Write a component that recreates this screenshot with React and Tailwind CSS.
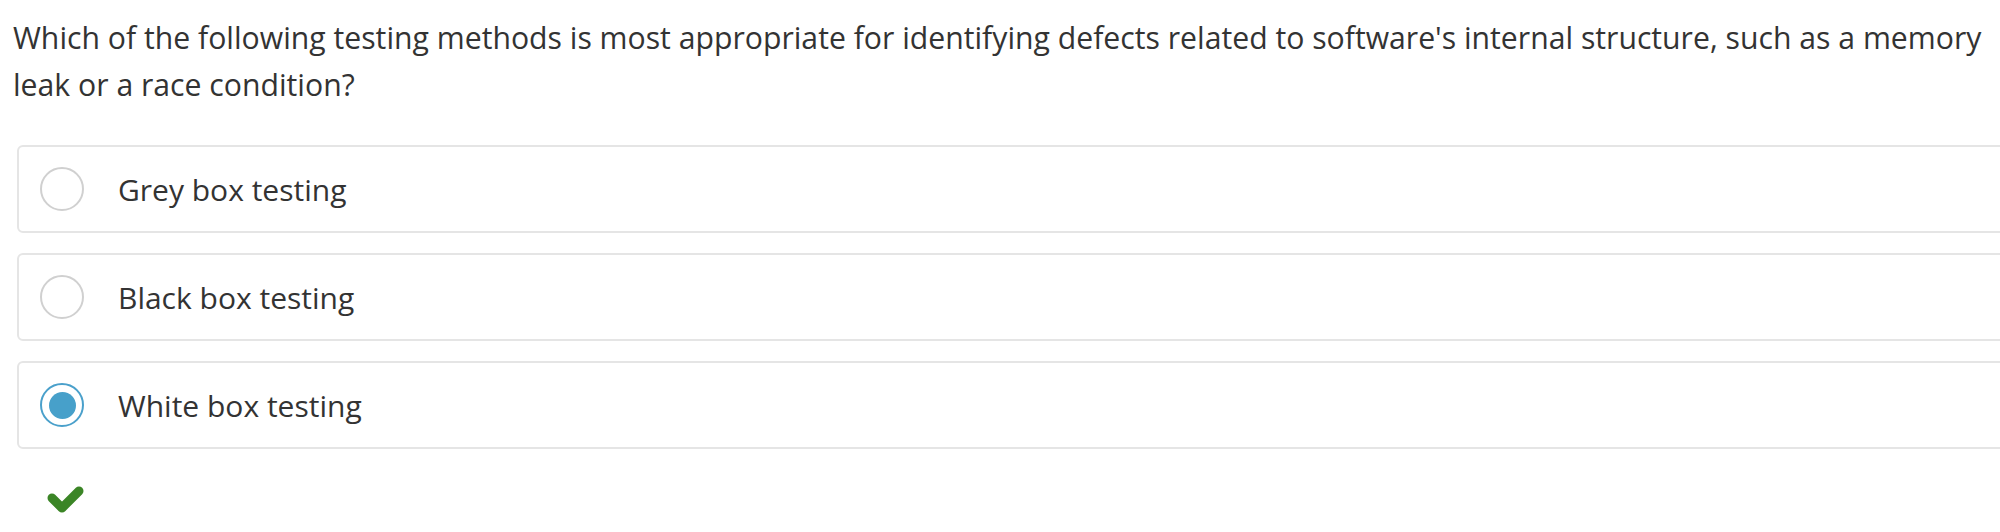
import { useState } from "react";

const options = [
  { id: "grey", label: "Grey box testing" },
  { id: "black", label: "Black box testing" },
  { id: "white", label: "White box testing" },
];

function Radio({ checked }) {
  return (
    <span
      className={`flex h-[44px] w-[44px] shrink-0 items-center justify-center rounded-full border-2 bg-white ${
        checked ? "border-[#4aa0cb]" : "border-[#d0d0d0]"
      }`}
    >
      {checked && <span className="h-[27px] w-[27px] rounded-full bg-[#47a0ca]"></span>}
    </span>
  );
}

function App() {
  const [selected, setSelected] = useState("white");

  return (
    <div
      className="min-h-screen w-full overflow-hidden bg-white text-[#333333]"
      style={{ fontFamily: '"Open Sans", "Noto Sans", sans-serif' }}
    >
      <div className="pt-[14px] pl-[13px]">
        <p className="text-[30.2px] leading-[47px] pr-[4px]">
          Which of the following testing methods is most appropriate for identifying defects related to
          software's internal structure, such as a memory leak or a race condition?
        </p>

        {/* Answer options */}
        <div className="mt-[37px] flex w-[2020px] flex-col gap-[20px] pl-[4px]">
          {options.map((opt) => (
            <label
              key={opt.id}
              onClick={() => setSelected(opt.id)}
              className="flex h-[88px] cursor-pointer items-center gap-[34px] rounded-[6px] border-2 border-[#e5e5e5] pl-[21px]"
            >
              <Radio checked={selected === opt.id} />
              <span className="text-[30px]">{opt.label}</span>
            </label>
          ))}
        </div>

        {/* Result */}
        <div className="mt-[34px] pl-[33px]">
          <svg width="40" height="32" viewBox="0 0 40 32">
            <polyline
              points="6,15 16,25 33,8"
              fill="none"
              stroke="#3b8526"
              strokeWidth="9"
              strokeLinecap="round"
              strokeLinejoin="round"
            />
          </svg>
        </div>
      </div>
    </div>
  );
}

export default App;
